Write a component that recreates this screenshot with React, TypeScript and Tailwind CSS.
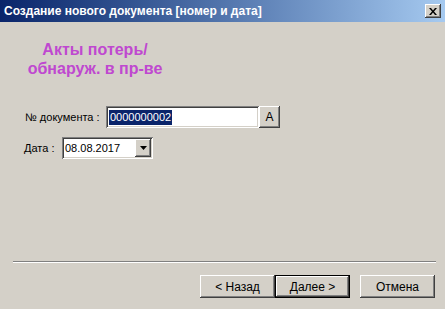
import React from "react";

const raised =
  "shadow-[inset_-1px_-1px_#404040,inset_1px_1px_#ffffff,inset_-2px_-2px_#808080,inset_2px_2px_#d4d0c8]";
const sunken =
  "shadow-[inset_1px_1px_#808080,inset_-1px_-1px_#ffffff,inset_2px_2px_#404040,inset_-2px_-2px_#d4d0c8]";

const WizardButton = ({ label, isDefault }: { label: string; isDefault?: boolean }) => (
  <button
    className={`h-[23px] w-[75px] bg-[#d4d0c8] text-[12px] text-black ${
      isDefault ? "border border-black" : ""
    }`}
  >
    <span className={`flex h-full w-full items-center justify-center ${raised}`}>{label}</span>
  </button>
);

const App = () => {
  return (
    <div
      className="flex h-[309px] w-[445px] flex-col bg-[#d4d0c8] text-black"
      style={{ fontFamily: '"Liberation Sans", Arial, sans-serif' }}
    >
      {/* Title bar */}
      <div className="flex h-[22px] items-center justify-between bg-gradient-to-r from-[#0a246a] to-[#a6caf0] pl-[4px] pr-[4px]">
        <span className="text-[12px] font-bold text-white">
          Создание нового документа [номер и дата]
        </span>
        <div className={`flex h-[14px] w-[16px] items-center justify-center bg-[#d4d0c8] ${raised}`}>
          <svg width="8" height="7" viewBox="0 0 8 7">
            <path d="M0 0h2l2 2.5L6 0h2L5 3.5 8 7H6L4 4.5 2 7H0l3-3.5z" fill="#000" />
          </svg>
        </div>
      </div>

      {/* Body */}
      <div className="flex flex-1 flex-col">
        <div className="ml-[22px] mt-[18px] w-[146px] text-center text-[16px] font-bold leading-[19px] text-[#bf48d0]">
          Акты потерь/
          <br />
          обнаруж. в пр-ве
        </div>

        {/* Document number */}
        <div className="mt-[28px] flex h-[22px] items-center">
          <span className="ml-[25px] w-[81px] text-[11px]">№ документа :</span>
          <div className={`flex h-[22px] w-[153px] items-center bg-white px-[3px] ${sunken}`}>
            <span className="bg-[#0a246a] px-[1px] text-[11px] leading-[15px] text-white">
              0000000002
            </span>
          </div>
          <button className={`h-[22px] w-[21px] bg-[#d4d0c8] text-[12px] ${raised}`}>A</button>
        </div>

        {/* Date */}
        <div className="mt-[9px] flex h-[22px] items-center">
          <span className="ml-[24px] w-[38px] text-[11px]">Дата :</span>
          <div className={`flex h-[22px] w-[91px] items-center justify-between bg-white py-[2px] pl-[3px] pr-[2px] ${sunken}`}>
            <span className="text-[11px]">08.08.2017</span>
            <div className={`flex h-[18px] w-[16px] items-center justify-center bg-[#d4d0c8] ${raised}`}>
              <svg width="7" height="4" viewBox="0 0 7 4">
                <path d="M0 0h7L3.5 4z" fill="#000" />
              </svg>
            </div>
          </div>
        </div>

        {/* Separator */}
        <div className="mt-auto ml-[13px] mr-[9px] border-t border-b border-t-[#808080] border-b-white" />

        {/* Buttons */}
        <div className="mb-[11px] mr-[10px] mt-[12px] flex justify-end">
          <WizardButton label="< Назад" />
          <WizardButton label="Далее >" isDefault />
          <div className="w-[10px]" />
          <WizardButton label="Отмена" />
        </div>
      </div>
    </div>
  );
};

export default App;
